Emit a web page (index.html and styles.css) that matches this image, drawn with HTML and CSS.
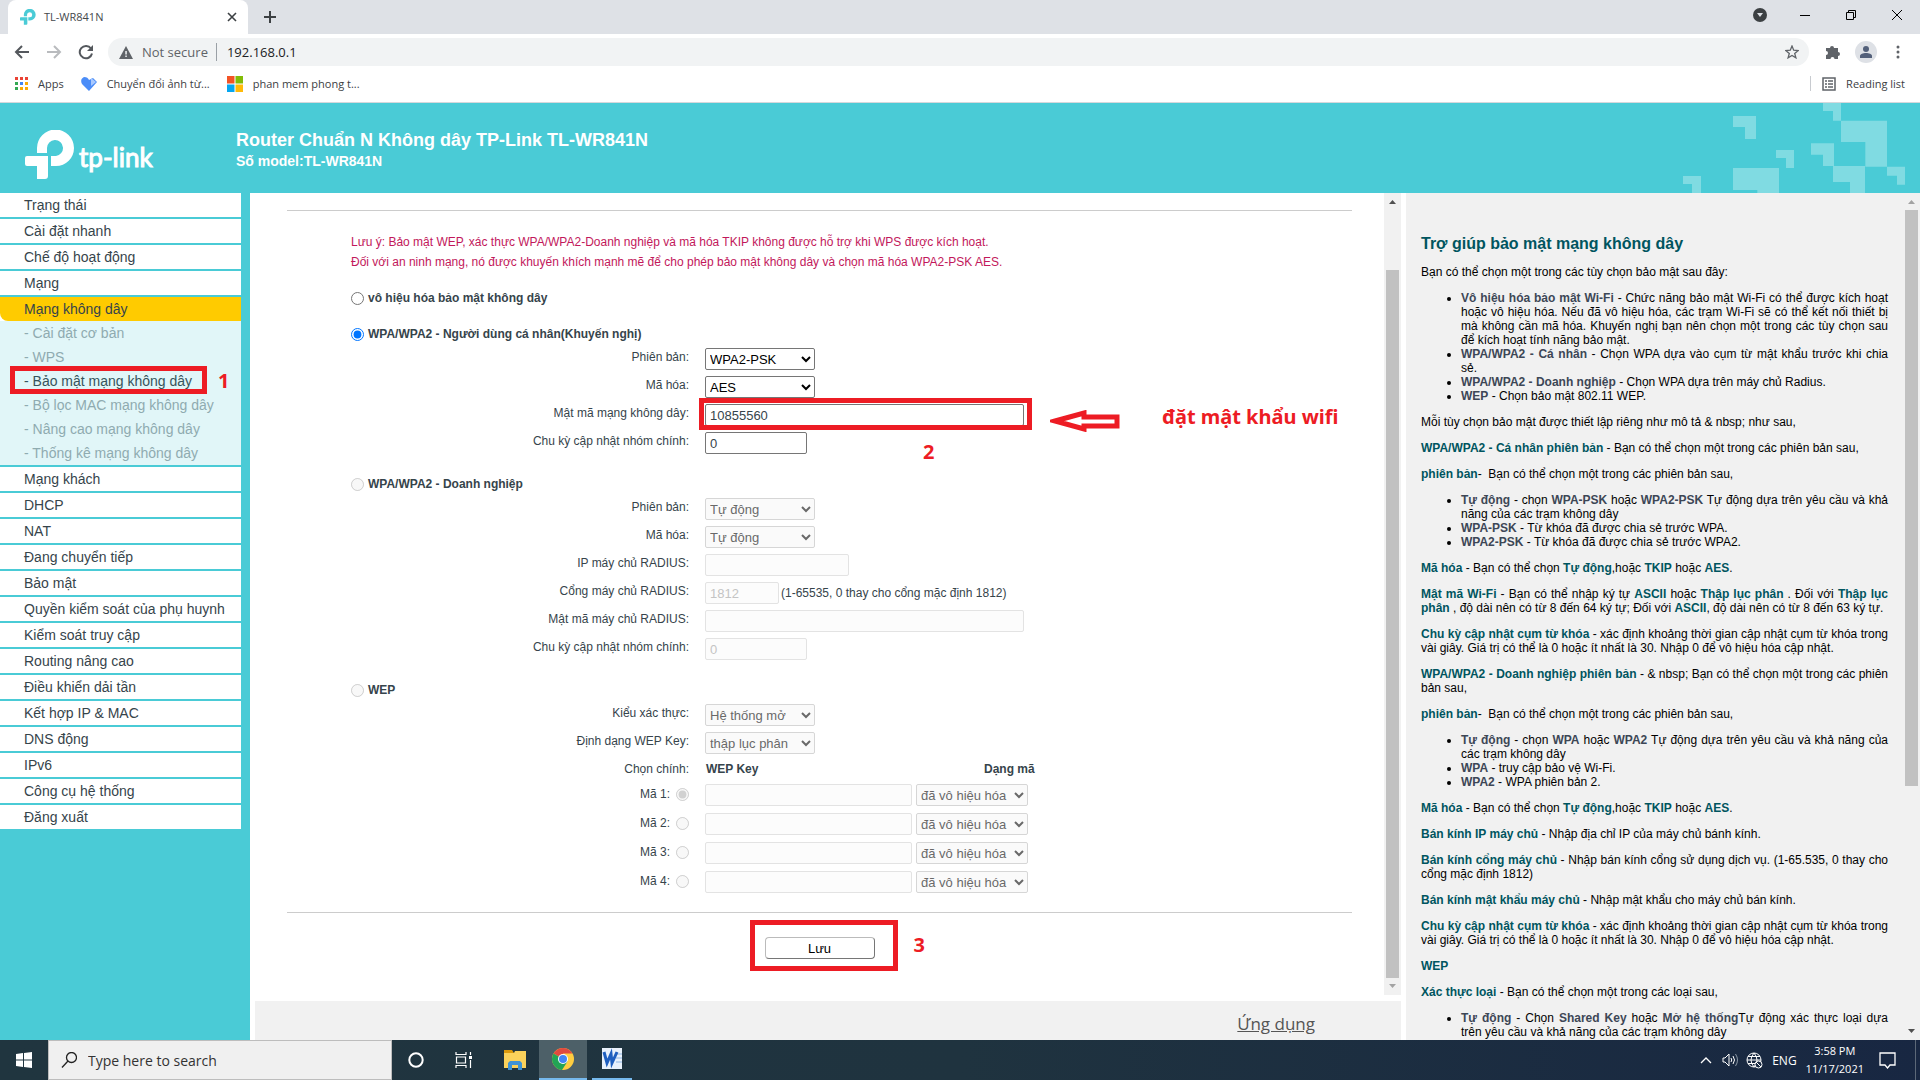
FILE: index.html
```html
<!doctype html>
<html lang="vi">
  <head>
    <meta charset="utf-8">
    <meta name="viewport" content="width=device-width, initial-scale=1">
    <title>TL-WR841N</title>
    <link rel="stylesheet" href="styles.css">
  </head>
  <body>
    <div id="tabstrip">
      <div class="tab">
        <svg width="16" height="16" viewBox="0 0 50 50"><path fill="#4acbd6" d="M12 23V18A18 18 0 0 1 49 18A18 18 0 0 1 31 36H26V26H31A8 8 0 1 0 22 18V23zM2 26H23V46a3 3 0 0 1-3 3H12V36H2a2 2 0 0 1-2-2V28a2 2 0 0 1 2-2z"/></svg>
        <span class="tab-title">TL-WR841N</span>
        <button class="plain" aria-label="Close tab"><svg width="10" height="10" viewBox="0 0 10 10"><path d="M1 1l8 8M9 1l-8 8" stroke="#3c4043" stroke-width="1.600"/></svg></button>
      </div>
      <button class="plain new-tab" aria-label="New tab"><svg width="12" height="12" viewBox="0 0 12 12"><path d="M6 0v12M0 6h12" stroke="#3c4043" stroke-width="2"/></svg></button>
      <div class="window-buttons">
        <button class="plain" aria-label="Search tabs"><svg width="14" height="14" viewBox="0 0 14 14"><circle cx="7" cy="7" r="7" fill="#3c4043"/><path d="M4 5h6l-3 4z" fill="#dee1e6"/></svg></button>
        <button class="plain minimize" aria-label="Minimize"><svg width="10" height="10" viewBox="0 0 10 10"><path d="M0 5.500h10" stroke="#000"/></svg></button>
        <button class="plain" aria-label="Restore"><svg width="10" height="10" viewBox="0 0 10 10"><path d="M.5 2.500h7v7h-7zM2.500 2.500v-2h7v7h-2" fill="none" stroke="#000"/></svg></button>
        <button class="plain" aria-label="Close"><svg width="10" height="10" viewBox="0 0 10 10"><path d="M0 0l10 10M10 0L0 10" stroke="#000"/></svg></button>
      </div>
    </div>

    <div id="toolbar">
      <button class="plain" aria-label="Back"><svg width="16" height="16" viewBox="0 0 16 16"><path d="M15 8H2M8 2L2 8l6 6" fill="none" stroke="#54585d" stroke-width="2"/></svg></button>
      <button class="plain" aria-label="Forward"><svg width="16" height="16" viewBox="0 0 16 16"><path d="M1 8h13M8 2l6 6-6 6" fill="none" stroke="#b9bbbe" stroke-width="2"/></svg></button>
      <button class="plain" aria-label="Reload"><svg width="16" height="16" viewBox="0 0 16 16"><path d="M13 4.500A6.200 6.200 0 1 0 14 9.500" fill="none" stroke="#54585d" stroke-width="2"/><path d="M15 1v6H9z" fill="#54585d"/></svg></button>
      <div id="omnibox">
        <svg width="14" height="13" viewBox="0 0 14 13"><path d="M7 0l7 13H0z" fill="#5f6368"/><path d="M6.300 5h1.500v3.500H6.300zM6.300 9.500h1.500V11H6.300z" fill="#f1f3f4"/></svg>
        <span class="secure">Not secure</span>
        <input type="text" value="192.168.0.1" aria-label="Address">
        <svg width="14" height="14" viewBox="0 0 14 14"><path d="M7 1l1.700 4.200 4.500.3-3.500 2.900 1.200 4.400L7 10.400l-3.900 2.400 1.200-4.400L.8 5.500l4.500-.3z" fill="none" stroke="#5f6368" stroke-width="1.300"/></svg>
      </div>
      <button class="plain" aria-label="Extensions"><svg width="16" height="16" viewBox="0 0 16 16"><path d="M1 4h4a2 2 0 1 1 4 0h4v4a2 2 0 1 1 0 4v3H9.500a2 2 0 1 0-4 0H1v-4a2 2 0 1 0 0-4z" fill="#5f6368"/></svg></button>
      <button class="plain profile" aria-label="Profile"><svg width="22" height="22" viewBox="0 0 22 22"><circle cx="11" cy="11" r="11" fill="#dee1e6"/><circle cx="11" cy="8" r="3" fill="#53607a"/><path d="M5 17v-2c0-2 3-3 6-3s6 1 6 3v2z" fill="#53607a"/></svg></button>
      <button class="plain" aria-label="Menu"><svg width="4" height="14" viewBox="0 0 4 14"><g fill="#5f6368"><circle cx="2" cy="2" r="1.500"/><circle cx="2" cy="7" r="1.500"/><circle cx="2" cy="12" r="1.500"/></g></svg></button>
    </div>

    <div id="bookmarks">
      <a href="#"><svg width="13" height="13" viewBox="0 0 13 13"><path fill="#ea4335" d="M0 0h3v3H0zM5 0h3v3H5zM10 0h3v3h-3z"/><path fill="#34a853" d="M0 5h3v3H0zM0 10h3v3H0z"/><path fill="#4285f4" d="M5 5h3v3H5z"/><path fill="#fbaa05" d="M10 5h3v3h-3zM5 10h3v3H5zM10 10h3v3h-3z"/></svg>Apps</a>
      <a href="#"><svg width="16" height="14" viewBox="0 0 16 14"><path d="M8 14L1 7C-1 3 1 1 3 0c3 0 4 1 5 3l4-2 4 4z" fill="#4b8df8"/><path d="M10 1l5 4-5 4z" fill="#a9c9ff"/></svg>Chuyển đổi ảnh từ...</a>
      <a href="#"><svg width="16" height="16" viewBox="0 0 16 16"><path fill="#f35325" d="M0 0h7.500v7.500H0z"/><path fill="#81bc06" d="M8.500 0H16v7.500H8.500z"/><path fill="#05a6f0" d="M0 8.500h7.500V16H0z"/><path fill="#ffba08" d="M8.500 8.500H16V16H8.500z"/></svg>phan mem phong t...</a>
      <a href="#" class="reading"><svg width="14" height="14" viewBox="0 0 14 14"><path d="M1 1h12v12H1z" fill="none" stroke="#5f6368" stroke-width="1.500"/><path d="M3 4h2m1 0h5M3 7h2m1 0h5M3 10h2m1 0h5" stroke="#5f6368" stroke-width="1.500"/></svg>Reading list</a>
    </div>

    <header>
      <div class="logo">
        <svg width="50" height="50" viewBox="0 0 50 50"><path fill="#fff" d="M12 23V18A18 18 0 0 1 49 18A18 18 0 0 1 31 36H26V26H31A8 8 0 1 0 22 18V23zM2 26H23V46a3 3 0 0 1-3 3H12V36H2a2 2 0 0 1-2-2V28a2 2 0 0 1 2-2z"/></svg>
        <span>tp-link</span>
      </div>
      <div class="model">
        <h1>Router Chuẩn N Không dây TP-Link TL-WR841N</h1>
        <p>Số model:TL-WR841N</p>
      </div>
      <svg class="pattern" width="240" height="90" viewBox="0 0 720 270"><path fill="#80dbe2" d="M9 219h54v51H36v-27H9zM159 39h69v69h-33v-36h-36zM159 195h138v75h-65v-9h-73zM288 141h54v54h-24v-30h-30zM429 0h54v53h-24v-29h-30zM483 53h138v138h-65v-74h-73zM393 121h69v68h-33v-34h-36zM459 189h96v81h-45v-33h-51zM621 191h54v54h-24v-27h-30z"/></svg>
    </header>

    <div id="frames">
      <nav>
        <ul class="menu">
          <li><a href="#">Trạng thái</a></li>
          <li><a href="#">Cài đặt nhanh</a></li>
          <li><a href="#">Chế độ hoạt động</a></li>
          <li><a href="#">Mạng</a></li>
          <li><a href="#" class="open">Mạng không dây</a>
            <ul class="submenu">
              <li><a href="#">- Cài đặt cơ bản</a></li>
              <li><a href="#">- WPS</a></li>
              <li class="current"><a href="#">- Bảo mật mạng không dây</a><span class="mark mark-menu"></span><b class="step step-1">1</b></li>
              <li><a href="#">- Bộ lọc MAC mạng không dây</a></li>
              <li><a href="#">- Nâng cao mạng không dây</a></li>
              <li><a href="#">- Thống kê mạng không dây</a></li>
            </ul>
          </li>
          <li><a href="#">Mạng khách</a></li>
          <li><a href="#">DHCP</a></li>
          <li><a href="#">NAT</a></li>
          <li><a href="#">Đang chuyển tiếp</a></li>
          <li><a href="#">Bảo mật</a></li>
          <li><a href="#">Quyền kiểm soát của phụ huynh</a></li>
          <li><a href="#">Kiểm soát truy cập</a></li>
          <li><a href="#">Routing nâng cao</a></li>
          <li><a href="#">Điều khiển dải tần</a></li>
          <li><a href="#">Kết hợp IP &amp; MAC</a></li>
          <li><a href="#">DNS động</a></li>
          <li><a href="#">IPv6</a></li>
          <li><a href="#">Công cụ hệ thống</a></li>
          <li><a href="#">Đăng xuất</a></li>
        </ul>
      </nav>

      <main>
        <div class="pane">
          <form>
            <hr>
            <p class="notice">Lưu ý: Bảo mật WEP, xác thực WPA/WPA2-Doanh nghiệp và mã hóa TKIP không được hỗ trợ khi WPS được kích hoạt.<br>Đối với an ninh mạng, nó được khuyến khích mạnh mẽ để cho phép bảo mật không dây và chọn mã hóa WPA2-PSK AES.</p>

            <section class="wide">
              <div class="type"><input type="radio" name="sec" id="sec-none"><label for="sec-none">vô hiệu hóa bảo mật không dây</label></div>
            </section>

            <section class="wide">
              <div class="type"><input type="radio" name="sec" id="sec-psk" checked><label for="sec-psk">WPA/WPA2 - Người dùng cá nhân(Khuyến nghị)</label></div>
              <div class="row"><label for="psk-ver">Phiên bản:</label><div><select id="psk-ver" class="medium"><option>WPA2-PSK</option></select></div></div>
              <div class="row"><label for="psk-enc">Mã hóa:</label><div><select id="psk-enc" class="medium"><option>AES</option></select></div></div>
              <div class="row"><label for="psk-key">Mật mã mạng không dây:</label>
                <div class="marked">
                  <input type="text" id="psk-key" class="long" value="10855560">
                  <span class="mark mark-key"></span>
                  <b class="step step-2">2</b>
                  <svg class="arrow" width="70" height="22" viewBox="0 0 70 22"><path d="M5 11L34 3v4h33v9H34v3z" fill="#fff" stroke="#ed1c24" stroke-width="5"/></svg>
                  <b class="step hint">đặt mật khẩu wifi</b>
                </div>
              </div>
              <div class="row"><label for="psk-per">Chu kỳ cập nhật nhóm chính:</label><div><input type="text" id="psk-per" class="short" value="0"></div></div>
            </section>

            <section>
              <div class="type"><input type="radio" name="sec" id="sec-ent" disabled><label for="sec-ent">WPA/WPA2 - Doanh nghiệp</label></div>
              <div class="row"><label for="ent-ver">Phiên bản:</label><div><select id="ent-ver" class="medium" disabled><option>Tự động</option></select></div></div>
              <div class="row"><label for="ent-enc">Mã hóa:</label><div><select id="ent-enc" class="medium" disabled><option>Tự động</option></select></div></div>
              <div class="row"><label for="ent-ip">IP máy chủ RADIUS:</label><div><input type="text" id="ent-ip" class="ip" disabled></div></div>
              <div class="row"><label for="ent-port">Cổng máy chủ RADIUS:</label><div><input type="text" id="ent-port" class="port" value="1812" disabled><span class="range">(1-65535, 0 thay cho cổng mặc định 1812)</span></div></div>
              <div class="row"><label for="ent-key">Mật mã máy chủ RADIUS:</label><div><input type="text" id="ent-key" class="long" disabled></div></div>
              <div class="row"><label for="ent-per">Chu kỳ cập nhật nhóm chính:</label><div><input type="text" id="ent-per" class="short" value="0" disabled></div></div>
            </section>

            <section>
              <div class="type"><input type="radio" name="sec" id="sec-wep" disabled><label for="sec-wep">WEP</label></div>
              <div class="row"><label for="wep-auth">Kiểu xác thực:</label><div><select id="wep-auth" class="medium" disabled><option>Hệ thống mở</option></select></div></div>
              <div class="row"><label for="wep-fmt">Định dạng WEP Key:</label><div><select id="wep-fmt" class="medium" disabled><option>thập lục phân</option></select></div></div>
              <div class="row heads"><span>Chọn chính:</span><div><b>WEP Key</b><b>Dạng mã</b></div></div>
              <div class="row key"><label for="k1">Mã 1:<input type="radio" name="key" id="k1" checked disabled></label><div><input type="text" aria-label="WEP Key 1" disabled><select aria-label="Dạng mã 1" disabled><option>đã vô hiệu hóa</option></select></div></div>
              <div class="row key"><label for="k2">Mã 2:<input type="radio" name="key" id="k2" disabled></label><div><input type="text" aria-label="WEP Key 2" disabled><select aria-label="Dạng mã 2" disabled><option>đã vô hiệu hóa</option></select></div></div>
              <div class="row key"><label for="k3">Mã 3:<input type="radio" name="key" id="k3" disabled></label><div><input type="text" aria-label="WEP Key 3" disabled><select aria-label="Dạng mã 3" disabled><option>đã vô hiệu hóa</option></select></div></div>
              <div class="row key"><label for="k4">Mã 4:<input type="radio" name="key" id="k4" disabled></label><div><input type="text" aria-label="WEP Key 4" disabled><select aria-label="Dạng mã 4" disabled><option>đã vô hiệu hóa</option></select></div></div>
            </section>

            <hr class="last">
            <div class="actions">
              <div class="marked"><button type="button" class="save">Lưu</button><span class="mark mark-save"></span><b class="step step-3">3</b></div>
            </div>
          </form>
          <div class="scrollbar main-bar"><i class="up dark"></i><div class="thumb"></div><i class="down"></i></div>
        </div>
        <footer><a href="#">Ứng dụng</a></footer>
      </main>

      <aside>
        <div class="help">
          <h2>Trợ giúp bảo mật mạng không dây</h2>
          <p>Bạn có thể chọn một trong các tùy chọn bảo mật sau đây:</p>
          <ul>
            <li><b>Vô hiệu hóa bảo mật Wi-Fi</b> - Chức năng bảo mật Wi-Fi có thể được kích hoạt hoặc vô hiệu hóa. Nếu đã vô hiệu hóa, các trạm Wi-Fi sẽ có thể kết nối thiết bị mà không cần mã hóa. Khuyến nghị bạn nên chọn một trong các tùy chọn sau để kích hoạt tính năng bảo mật.</li>
            <li><b>WPA/WPA2 - Cá nhân</b> - Chọn WPA dựa vào cụm từ mật khẩu trước khi chia sẻ.</li>
            <li><b>WPA/WPA2 - Doanh nghiệp</b> - Chọn WPA dựa trên máy chủ Radius.</li>
            <li><b>WEP</b> - Chọn bảo mật 802.11 WEP.</li>
          </ul>
          <p>Mỗi tùy chọn bảo mật được thiết lập riêng như mô tả &amp; nbsp; như sau,</p>
          <p><b>WPA/WPA2 - Cá nhân phiên bản</b> - Bạn có thể chọn một trong các phiên bản sau,</p>
          <p><b>phiên bản</b>-&nbsp; Bạn có thể chọn một trong các phiên bản sau,</p>
          <ul>
            <li><b>Tự động</b> - chọn <b>WPA-PSK</b> hoặc <b>WPA2-PSK</b> Tự động dựa trên yêu cầu và khả năng của các trạm không dây</li>
            <li><b>WPA-PSK</b> - Từ khóa đã được chia sẻ trước WPA.</li>
            <li><b>WPA2-PSK</b> - Từ khóa đã được chia sẻ trước WPA2.</li>
          </ul>
          <p><b>Mã hóa</b> - Bạn có thể chọn <b>Tự động</b>,hoặc <b>TKIP</b> hoặc <b>AES</b>.</p>
          <p><b>Mật mã Wi-Fi</b> - Bạn có thể nhập ký tự <b>ASCII</b> hoặc <b>Thập lục phân</b> . Đối với <b>Thập lục phân</b> , độ dài nên có từ 8 đến 64 ký tự; Đối với <b>ASCII</b>, độ dài nên có từ 8 đến 63 ký tự.</p>
          <p><b>Chu kỳ cập nhật cụm từ khóa</b> - xác định khoảng thời gian cập nhật cụm từ khóa trong vài giây. Giá trị có thể là 0 hoặc ít nhất là 30. Nhập 0 để vô hiệu hóa cập nhật.</p>
          <p><b>WPA/WPA2 - Doanh nghiệp phiên bản</b> - &amp; nbsp; Bạn có thể chọn một trong các phiên bản sau,</p>
          <p><b>phiên bản</b>-&nbsp; Bạn có thể chọn một trong các phiên bản sau,</p>
          <ul>
            <li><b>Tự động</b> - chọn <b>WPA</b> hoặc <b>WPA2</b> Tự động dựa trên yêu cầu và khả năng của các trạm không dây</li>
            <li><b>WPA</b> - truy cập bảo vệ Wi-Fi.</li>
            <li><b>WPA2</b> - WPA phiên bản 2.</li>
          </ul>
          <p><b>Mã hóa</b> - Bạn có thể chọn <b>Tự động</b>,hoặc <b>TKIP</b> hoặc <b>AES</b>.</p>
          <p><b>Bán kính IP máy chủ</b> - Nhập địa chỉ IP của máy chủ bánh kính.</p>
          <p><b>Bán kính cổng máy chủ</b> - Nhập bán kính cổng sử dụng dịch vụ. (1-65.535, 0 thay cho cổng mặc định 1812)</p>
          <p><b>Bán kính mật khẩu máy chủ</b> - Nhập mật khẩu cho máy chủ bán kính.</p>
          <p><b>Chu kỳ cập nhật cụm từ khóa</b> - xác định khoảng thời gian cập nhật cụm từ khóa trong vài giây. Giá trị có thể là 0 hoặc ít nhất là 30. Nhập 0 để vô hiệu hóa cập nhật.</p>
          <p><b>WEP</b></p>
          <p><b>Xác thực loại</b> - Bạn có thể chọn một trong các loại sau,</p>
          <ul>
            <li><b>Tự động</b> - Chọn <b>Shared Key</b> hoặc <b>Mở hệ thống</b>Tự động xác thực loại dựa trên yêu cầu và khả năng của các trạm không dây</li>
          </ul>
        </div>
        <div class="scrollbar help-bar"><i class="up"></i><div class="thumb"></div><i class="down dark"></i></div>
      </aside>
    </div>

    <div id="taskbar">
      <button class="start" aria-label="Start"><svg width="16" height="16" viewBox="0 0 16 16"><path fill="#fff" d="M0 2l7-1v6.500H0zM8 1l8-1v7.500H8zM0 8.500h7V15l-7-1zM8 8.500h8V16l-8-1z"/></svg></button>
      <div class="search">
        <svg width="16" height="16" viewBox="0 0 16 16"><circle cx="10.500" cy="5.500" r="5" fill="none" stroke="#222" stroke-width="1.300"/><path d="M7 9l-6 6.500" stroke="#222" stroke-width="1.300"/></svg>
        <input type="text" placeholder="Type here to search" aria-label="Search">
      </div>
      <button class="app" aria-label="Cortana"><svg width="16" height="16" viewBox="0 0 16 16"><circle cx="8" cy="8" r="6.700" fill="none" stroke="#fff" stroke-width="2"/></svg></button>
      <button class="app" aria-label="Task View"><svg width="18" height="16" viewBox="0 0 18 16"><path d="M1 0v2.500h10V0M1 16v-2.500h10V16M1.500 5h9v6h-9zM15.500 0v3M15.500 8v8" fill="none" stroke="#fff" stroke-width="1.200"/><path fill="#fff" d="M14 4h3v3h-3z"/></svg></button>
      <button class="app explorer" aria-label="File Explorer"><svg width="22" height="20" viewBox="0 0 22 20"><path fill="#dd9a0c" d="M0 0h8l2 3H0z"/><path fill="#fbd25b" d="M0 3h10l1-2h11v17H0z"/><path fill="#3e93d6" d="M4 20v-7l2-2h10l2 2v7h-4v-5H8v5z"/></svg></button>
      <button class="app active" aria-label="Chrome"><svg width="22" height="22" viewBox="0 0 22 22"><circle cx="11" cy="11" r="11" fill="#ffcd40"/><path d="M11 11L1.500 5.500A11 11 0 0 1 20.500 5.500H11z" fill="#e04a3f"/><path d="M1.500 5.500A11 11 0 0 0 10 22l5.500-8.500L11 11z" fill="#23a455"/><circle cx="11" cy="11" r="5" fill="#fff"/><circle cx="11" cy="11" r="4" fill="#4285f4"/></svg></button>
      <button class="app running" aria-label="Word"><svg width="22" height="22" viewBox="0 0 22 22"><path fill="#e9f1fb" d="M1 0h20v21H1z"/><path fill="#bcd3ef" d="M15 5h6v2h-6zM15 9h6v2h-6zM15 13h6v2h-6z"/><path d="M3 4l3 11 4-9 1 9 5-11" fill="none" stroke="#1f5fbf" stroke-width="3"/></svg></button>
      <div class="tray">
        <svg width="12" height="8" viewBox="0 0 12 8"><path d="M1 7l5-5 5 5" fill="none" stroke="#fff" stroke-width="1.300"/></svg>
        <svg class="volume" width="17" height="14" viewBox="0 0 17 14"><path d="M1 5h2l4-4v12L3 9H1z" fill="none" stroke="#fff"/><path d="M9 5q1.500 2 0 4M11 3q3 4 0 8" fill="none" stroke="#fff"/><path d="M13.500 1q4 6 0 12" fill="none" stroke="#8b98a5"/></svg>
        <svg width="17" height="17" viewBox="0 0 17 17"><circle cx="8" cy="8" r="7" fill="none" stroke="#fff"/><path d="M1 8h14M2 4.500h12M2 11.500h8M8 1q-6 7 0 14M8 1q6 7 0 14" fill="none" stroke="#fff"/><circle cx="12.500" cy="12.500" r="3.500" fill="#1a2b44" stroke="#fff"/><path d="M10 10l5 5" stroke="#fff"/></svg>
        <span class="lang">ENG</span>
        <div class="clock">3:58 PM<br>11/17/2021</div>
        <svg class="notes" width="17" height="17" viewBox="0 0 17 17"><path d="M1 1h15v12h-5l-2.500 3L6 13H1z" fill="none" stroke="#fff" stroke-width="1.300"/></svg>
      </div>
    </div>
  </body>
</html>
```

FILE: styles.css
```css
* {
  box-sizing: border-box;
}

body {
  margin: 0;
  height: 100vh;
  overflow: hidden;
  display: flex;
  flex-direction: column;
  background: #fff;
  color: #36444b;
  font-family: "Liberation Sans", Arial, sans-serif;
  font-size: 12px;
}

a {
  color: inherit;
  text-decoration: none;
}

svg {
  display: block;
  flex: none;
}

.plain {
  border: 0;
  padding: 0;
  background: none;
  display: flex;
}

/* browser chrome */

#tabstrip, #toolbar, #bookmarks, #taskbar {
  font-family: "Open Sans", "Noto Sans", sans-serif;
}

#tabstrip {
  display: flex;
  align-items: center;
  height: 34px;
  flex: none;
  padding-left: 8px;
  background: #dee1e6;
}

.tab {
  display: flex;
  align-items: center;
  width: 240px;
  height: 34px;
  padding: 0 11px 0 12px;
  background: #fff;
  border-radius: 8px 8px 0 0;
  color: #45494d;
  font-size: 11px;
}

.tab-title {
  flex: 1;
  padding: 0 0 2px 8px;
}

.new-tab {
  margin-left: 16px;
}

.window-buttons {
  display: flex;
  align-items: center;
  gap: 36px;
  margin-left: auto;
  padding: 0 18px 5px 0;
}

.window-buttons .minimize {
  margin-left: -3px;
}

#toolbar {
  display: flex;
  align-items: center;
  flex: none;
  height: 36px;
  gap: 16px;
  padding: 0 20px 0 14px;
}

#omnibox {
  flex: 1;
  display: flex;
  align-items: center;
  height: 28px;
  margin-left: -2px;
  padding: 0 10px 0 11px;
  border-radius: 14px;
  background: #f1f3f4;
  font-size: 13px;
}

#omnibox .secure {
  margin-left: 9px;
  padding-right: 8px;
  border-right: 1px solid #9aa0a6;
  color: #5f6368;
}

#omnibox input {
  flex: 1;
  border: 0;
  padding: 0 10px;
  background: none;
  color: #202124;
  font: inherit;
}

#toolbar .profile {
  margin: 0 3px 0 -2px;
}

#bookmarks {
  display: flex;
  align-items: center;
  flex: none;
  height: 33px;
  gap: 17px;
  padding: 0 15px 5px;
  border-bottom: 1px solid #d5d8dc;
  font-size: 11px;
  color: #3c4043;
}

#bookmarks a {
  display: flex;
  align-items: center;
  gap: 10px;
}

#bookmarks .reading {
  margin-left: auto;
  padding-left: 11px;
  border-left: 1px solid #c8cbd0;
}

/* router page */

header {
  display: flex;
  flex: none;
  height: 90px;
  background: #4acbd6;
  color: #fff;
}

.logo {
  display: flex;
  width: 236px;
  padding: 27px 0 0 25px;
}

.logo span {
  margin: 11px 0 0 4px;
  font-family: Lato, sans-serif;
  font-size: 26px;
  line-height: 32px;
  -webkit-text-stroke: 1px #fff;
}

.model {
  flex: 1;
  padding-top: 26px;
}

.model h1 {
  margin: 0;
  font-size: 18px;
  line-height: 22px;
}

.model p {
  margin: 0;
  font-size: 14px;
  font-weight: bold;
  line-height: 20px;
}

#frames {
  flex: 1;
  min-height: 0;
  display: flex;
}

nav {
  flex: none;
  width: 250px;
  padding-right: 9px;
  background: #4acbd6;
}

nav ul {
  margin: 0;
  padding: 0;
  list-style: none;
}

nav a {
  display: block;
  padding-left: 24px;
  font-size: 14px;
  line-height: 24px;
  white-space: nowrap;
}

.menu > li {
  margin-bottom: 2px;
  background: #fff;
}

.menu .open {
  background: #ffcb00;
  border-radius: 0 0 0 8px;
}

.submenu {
  background: #e1f6f8;
  color: #8fabb0;
}

.submenu .current {
  position: relative;
  color: #36555c;
}

main {
  flex: 1;
  min-width: 0;
  display: flex;
  flex-direction: column;
  padding-left: 5px;
  border-right: 5px solid #fff;
}

.pane {
  flex: 1;
  min-height: 0;
  display: flex;
}

form {
  flex: 1;
  padding: 17px 32px 0;
}

hr {
  margin: 0;
  border: 0;
  border-top: 1px solid #ccc;
}

hr.last {
  margin-top: 12px;
}

.notice {
  margin: 21px 0 0 64px;
  color: #c2185b;
  line-height: 20px;
}

section {
  margin: 14px 0 0 64px;
}

section.wide {
  margin-top: 16px;
}

.type {
  display: flex;
  align-items: center;
  gap: 4px;
  height: 20px;
  margin-bottom: 4px;
  font-weight: bold;
}

input[type=radio] {
  margin: 0;
}

.row {
  display: grid;
  grid-template-columns: 338px 1fr;
  gap: 16px;
  height: 28px;
}

.row > label, .row > span {
  text-align: right;
  line-height: 18px;
}

.row > div {
  display: flex;
  align-items: flex-start;
}

.row input[type=text], select {
  height: 22px;
  border: 1px solid #767676;
  border-radius: 2px;
  background: #fff;
  color: #36444b;
  font-family: inherit;
  font-size: 13px;
}

.row input[type=text] {
  padding: 0 4px;
}

select {
  padding: 0;
  color: #000;
}

.row input[type=text]:disabled {
  background: #fcfcfc;
  border-color: #e3e3e3;
  color: #c4c4c4;
}

select:disabled {
  background: #fafafa;
  border-color: #ccc;
  color: #444;
  opacity: .8;
}

.medium {
  width: 110px;
}

.row .long {
  width: 319px;
}

.row .short {
  width: 102px;
}

.row .ip {
  width: 144px;
}

.row .port {
  width: 74px;
}

.range {
  padding-left: 2px;
  line-height: 22px;
}

.heads {
  height: 24px;
}

.heads b {
  width: 278px;
  padding-left: 1px;
  line-height: 18px;
}

.key {
  height: 29px;
}

.key > label {
  display: flex;
  align-items: center;
  justify-content: flex-end;
  gap: 6px;
  height: 20px;
}

.key > div {
  gap: 4px;
}

.key input[type=text] {
  width: 207px;
}

.key select {
  width: 112px;
}

.actions {
  display: flex;
  justify-content: center;
  padding-top: 24px;
}

.save {
  width: 110px;
  height: 22px;
  border: 1px solid #767676;
  border-color: #bbb #767676 #767676 #bbb;
  border-radius: 4px;
  background: #fff;
  color: #000;
  font-family: inherit;
  font-size: 13px;
}

footer {
  flex: none;
  height: 39px;
  margin-top: 6px;
  padding-right: 86px;
  background: #f1f1f1;
  text-align: right;
}

footer a {
  color: #555;
  font-family: "Open Sans", sans-serif;
  font-size: 17px;
  line-height: 46px;
  text-decoration: underline;
}

/* red tutorial marks laid over the page */

.marked {
  position: relative;
}

.mark {
  position: absolute;
  border: 5px solid #ed1c24;
  pointer-events: none;
}

.mark-menu {
  top: -3px;
  left: 10px;
  width: 197px;
  height: 28px;
}

.mark-key {
  top: -6px;
  left: -6px;
  width: 333px;
  height: 32px;
}

.mark-save {
  top: -17px;
  left: -15px;
  width: 148px;
  height: 51px;
}

.step {
  position: absolute;
  color: #ed1c24;
  font-family: "Noto Sans", "Open Sans", sans-serif;
  font-size: 20px;
  line-height: 24px;
  white-space: nowrap;
}

.step-1 {
  top: 0;
  left: 218px;
}

.step-2 {
  top: 36px;
  left: 218px;
}

.step-3 {
  top: -4px;
  left: 149px;
}

.arrow {
  position: absolute;
  top: 6px;
  left: 345px;
}

.hint {
  top: 1px;
  left: 457px;
}

/* scrollbars */

.scrollbar {
  flex: none;
  display: flex;
  flex-direction: column;
  align-items: center;
  width: 17px;
  background: #f1f1f1;
}

.scrollbar .thumb {
  width: 13px;
  background: #c1c1c1;
}

.scrollbar i {
  width: 7px;
  height: 4px;
  background: #a3a3a3;
}

.scrollbar .up {
  margin: 7px 0 6px;
  clip-path: polygon(50% 0, 100% 100%, 0 100%);
}

.scrollbar .down {
  margin: auto 0 7px;
  clip-path: polygon(0 0, 100% 0, 50% 100%);
}

.scrollbar .dark {
  background: #505050;
}

.main-bar .thumb {
  margin-top: 60px;
  flex: 1;
}

.main-bar .down {
  margin-top: 6px;
}

.help-bar .thumb {
  flex: 0 0 68%;
}

/* help frame */

aside {
  flex: none;
  display: flex;
  width: 514px;
  background: #f1f1f1;
  color: #000;
}

.help {
  flex: 1;
  overflow: hidden;
  padding: 41px 15px 0;
  line-height: 14px;
  text-align: justify;
}

.help h2 {
  margin: 0;
  color: #00555f;
  font-size: 16px;
  line-height: 19px;
}

.help p, .help ul {
  margin: 12px 0;
}

.help ul {
  padding-left: 40px;
}

.help p b {
  color: #00555f;
}

.help li b {
  color: #3d4756;
}

/* windows taskbar */

#taskbar {
  display: flex;
  flex: none;
  height: 40px;
  background: linear-gradient(90deg, #20353f, #1f333f 50%, #182742);
  color: #fff;
}

#taskbar button {
  display: flex;
  align-items: center;
  justify-content: center;
  width: 48px;
  padding: 0;
  border: 0;
  background: none;
}

.search {
  display: flex;
  align-items: center;
  gap: 11px;
  width: 344px;
  padding-left: 12px;
  border: 1px solid #bdbdbd;
  background: #f0f0f0;
}

.search input {
  flex: 1;
  border: 0;
  padding: 0;
  background: none;
  font-family: inherit;
  font-size: 14px;
}

.search input::placeholder {
  color: #333;
}

#taskbar .explorer {
  margin-left: 3px;
}

#taskbar .active {
  background: #4d6068;
  border-bottom: 2px solid #76b9ed;
}

#taskbar .running {
  width: 40px;
  margin-left: 5px;
  border-bottom: 2px solid #76b9ed;
}

.tray {
  display: flex;
  align-items: center;
  margin-left: auto;
  margin-right: 4px;
  padding-right: 19px;
  border-right: 1px solid #5c6878;
  font-size: 12px;
}

.tray .volume {
  margin: 0 7px 0 10px;
}

.lang {
  margin: 0 9px;
}

.clock {
  font-size: 11px;
  line-height: 18px;
  text-align: center;
}

.notes {
  margin-left: 15px;
}
```
